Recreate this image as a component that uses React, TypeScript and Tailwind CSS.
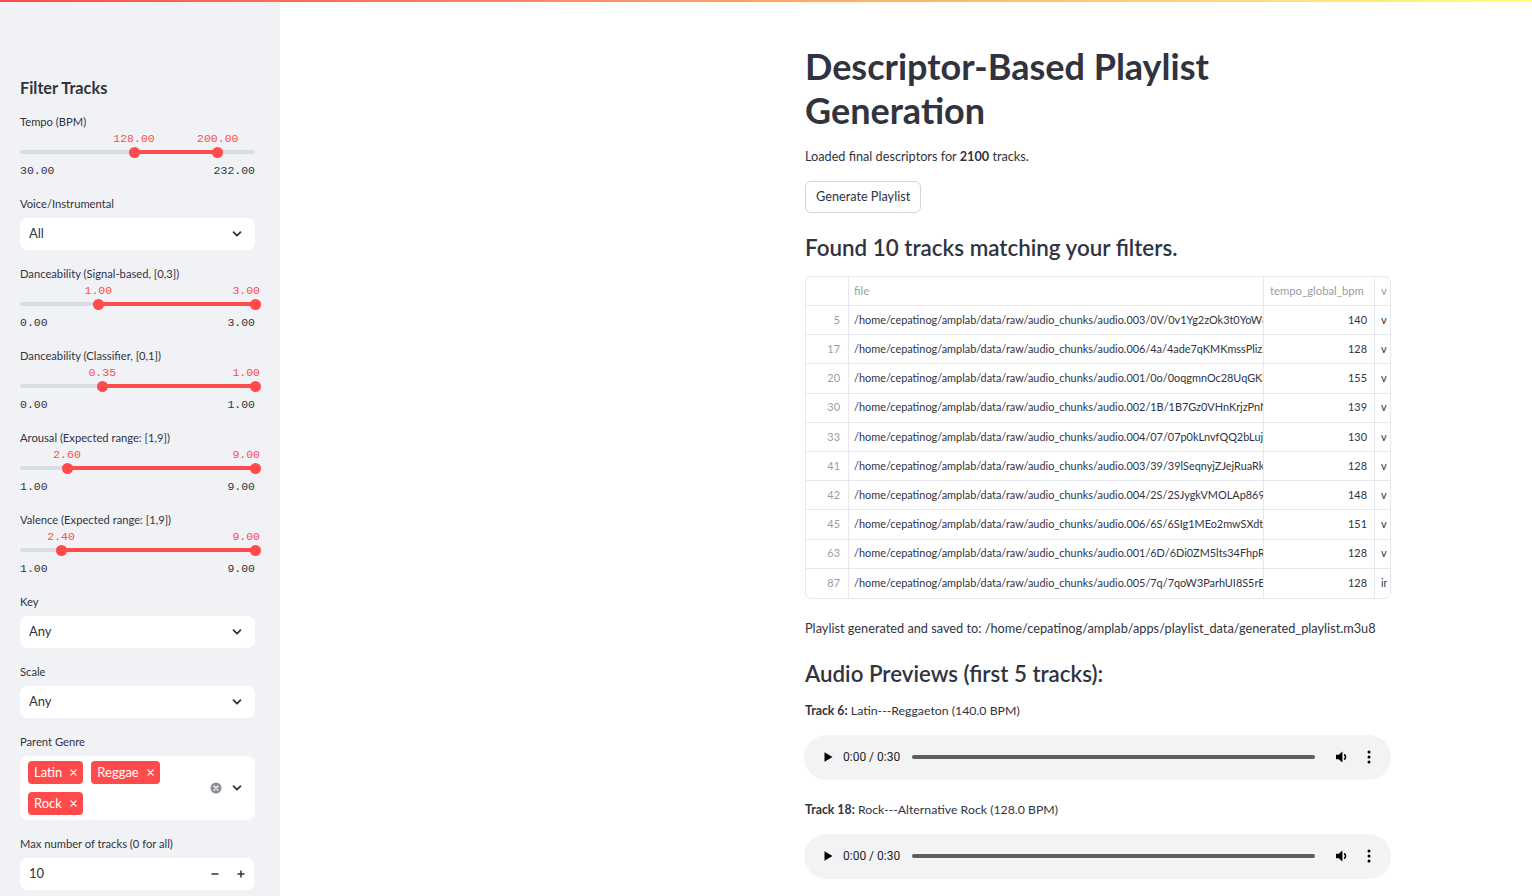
import React from "react";

const SANS = "font-['Lato','Noto_Sans',sans-serif]";
const MONO = "font-['Liberation_Mono','DejaVu_Sans_Mono',monospace]";

function Chevron() {
  return (
    <svg width="12" height="12" viewBox="0 0 12 12" className="shrink-0">
      <path d="M2.5 4.2 L6 7.7 L9.5 4.2" fill="none" stroke="#31333f" strokeWidth="1.8" strokeLinecap="round" strokeLinejoin="round" />
    </svg>
  );
}

function Label({ children }: { children: React.ReactNode }) {
  return <div className="h-[16px] text-[11.2px] leading-[16px] text-[#31333f]">{children}</div>;
}

function RangeSlider({ min, max, lo, hi }: { min: number; max: number; lo: number; hi: number }) {
  const W = 235;
  const p1 = ((lo - min) / (max - min)) * W;
  const p2 = ((hi - min) / (max - min)) * W;
  const f = (v: number) => v.toFixed(2);
  const valLabel = (p: number, v: number) => {
    const atEnd = p >= W - 0.5;
    return (
      <div
        className={`absolute top-0 h-[16px] text-[11.5px] leading-[16px] text-[#ff4b4b] whitespace-nowrap ${MONO}`}
        style={atEnd ? { right: -5 } : { left: p, transform: "translateX(-50%)" }}
      >
        {f(v)}
      </div>
    );
  };
  return (
    <div className="relative mt-[1px] h-[48px] w-[235px]">
      {valLabel(p1, lo)}
      {valLabel(p2, hi)}
      <div className="absolute left-0 right-0 top-[19px] h-[4px] rounded-full bg-[#d9dce4]" />
      <div className="absolute top-[19px] h-[4px] bg-[#ff4b4b]" style={{ left: p1, width: p2 - p1 }} />
      <div className="absolute top-[15.5px] h-[11px] w-[11px] rounded-full bg-[#ff4b4b]" style={{ left: p1 - 5.5 }} />
      <div className="absolute top-[15.5px] h-[11px] w-[11px] rounded-full bg-[#ff4b4b]" style={{ left: p2 - 5.5 }} />
      <div className={`absolute left-0 right-0 top-[32px] flex h-[16px] justify-between text-[11.5px] leading-[16px] text-[#31333f] ${MONO}`}>
        <span>{f(min)}</span>
        <span>{f(max)}</span>
      </div>
    </div>
  );
}

function Select({ value }: { value: string }) {
  return (
    <div className="mt-[6px] flex h-[32px] w-[235px] items-center justify-between rounded-[7px] bg-white pl-[9px] pr-[12px] text-[13px] text-[#31333f]">
      <span>{value}</span>
      <Chevron />
    </div>
  );
}

function Tag({ text }: { text: string }) {
  return (
    <div className="flex h-[23px] items-center gap-[8px] rounded-[4px] bg-[#ff4b4b] pl-[6px] pr-[6px] text-[13px] text-white">
      <span>{text}</span>
      <svg width="7" height="7" viewBox="0 0 8 8">
        <path d="M1 1 L7 7 M7 1 L1 7" stroke="white" strokeWidth="1.4" strokeLinecap="round" />
      </svg>
    </div>
  );
}

function Sidebar() {
  return (
    <div className={`flex w-[280px] shrink-0 flex-col bg-[#f0f2f6] pl-[20px] pt-[75px] ${SANS}`}>
      <div className="h-[22px] text-[16.3px] font-bold leading-[22px] text-[#31333f]">Filter Tracks</div>
      <div className="mt-[15px]">
        <Label>Tempo (BPM)</Label>
        <RangeSlider min={30} max={232} lo={128} hi={200} />
      </div>
      <div className="mt-[17px]">
        <Label>Voice/Instrumental</Label>
        <Select value="All" />
      </div>
      <div className="mt-[16px]">
        <Label>Danceability (Signal-based, [0,3])</Label>
        <RangeSlider min={0} max={3} lo={1} hi={3} />
      </div>
      <div className="mt-[17px]">
        <Label>Danceability (Classifier, [0,1])</Label>
        <RangeSlider min={0} max={1} lo={0.35} hi={1} />
      </div>
      <div className="mt-[17px]">
        <Label>Arousal (Expected range: [1,9])</Label>
        <RangeSlider min={1} max={9} lo={2.6} hi={9} />
      </div>
      <div className="mt-[17px]">
        <Label>Valence (Expected range: [1,9])</Label>
        <RangeSlider min={1} max={9} lo={2.4} hi={9} />
      </div>
      <div className="mt-[17px]">
        <Label>Key</Label>
        <Select value="Any" />
      </div>
      <div className="mt-[16px]">
        <Label>Scale</Label>
        <Select value="Any" />
      </div>
      <div className="mt-[16px]">
        <Label>Parent Genre</Label>
        <div className="mt-[6px] flex h-[64px] w-[235px] items-center rounded-[7px] bg-white pl-[8px] pr-[12px]">
          <div className="flex w-[170px] flex-wrap gap-x-[8px] gap-y-[8px]">
            <Tag text="Latin" />
            <Tag text="Reggae" />
            <Tag text="Rock" />
          </div>
          <div className="ml-auto flex items-center gap-[9px]">
            <svg width="12" height="12" viewBox="0 0 12 12">
              <circle cx="6" cy="6" r="5.5" fill="#8b8e97" />
              <path d="M4 4 L8 8 M8 4 L4 8" stroke="white" strokeWidth="1.2" strokeLinecap="round" />
            </svg>
            <Chevron />
          </div>
        </div>
      </div>
      <div className="mt-[16px]">
        <Label>Max number of tracks (0 for all)</Label>
        <div className="mt-[6px] flex h-[32px] w-[234px] items-center rounded-[7px] bg-white pl-[9px] text-[13px] text-[#31333f]">
          <span>10</span>
          <div className="ml-auto flex h-full">
            <div className="flex w-[26px] items-center justify-center">
              <svg width="8" height="8" viewBox="0 0 8 8"><path d="M0.5 4 H7.5" stroke="#31333f" strokeWidth="1.5" /></svg>
            </div>
            <div className="flex w-[26px] items-center justify-center">
              <svg width="8" height="8" viewBox="0 0 8 8"><path d="M0.5 4 H7.5 M4 0.5 V7.5" stroke="#31333f" strokeWidth="1.5" /></svg>
            </div>
          </div>
        </div>
      </div>
    </div>
  );
}

const rows: [number, string, number, string][] = [
  [5, "audio.003/0V/0v1Yg2zOk3t0YoW8SqPxL.mp3", 140, "voice"],
  [17, "audio.006/4a/4ade7qKMKmssPlizXcQ2.mp3", 128, "voice"],
  [20, "audio.001/0o/0oqgmnOc28UqGKb7Tm.mp3", 155, "voice"],
  [30, "audio.002/1B/1B7Gz0VHnKrjzPnNw4e.mp3", 139, "voice"],
  [33, "audio.004/07/07p0kLnvfQQ2bLujR9a.mp3", 130, "voice"],
  [41, "audio.003/39/39lSeqnyjZJejRuaRk1.mp3", 128, "voice"],
  [42, "audio.004/2S/2SJygkVMOLAp869dWz.mp3", 148, "voice"],
  [45, "audio.006/6S/6SIg1MEo2mwSXdtHn.mp3", 151, "voice"],
  [63, "audio.001/6D/6Di0ZM5lts34FhpRq8.mp3", 128, "voice"],
  [87, "audio.005/7q/7qoW3ParhUI8S5rEv.mp3", 128, "instrumental"],
];

function DataTable() {
  return (
    <div className="mt-[14px] w-[586px] overflow-hidden rounded-[6px] border border-[#e6e8ed] text-[10.9px]">
      <div className="flex h-[29px] border-b border-[#e6e8ed] text-[11.3px] text-[#9a9ca5]">
        <div className="w-[43px] shrink-0 border-r border-[#e6e8ed]" />
        <div className="flex w-[415px] shrink-0 items-center border-r border-[#e6e8ed] pl-[5px]">file</div>
        <div className="flex w-[111px] shrink-0 items-center border-r border-[#e6e8ed] pl-[6px]">tempo_global_bpm</div>
        <div className="flex flex-1 items-center pl-[6px]">
          <span className="inline-block w-[6px] overflow-hidden whitespace-nowrap">voice_instrumental</span>
        </div>
      </div>
      {rows.map(([idx, f, bpm, vi], i) => (
        <div key={idx} className={`flex h-[29.2px] ${i < rows.length - 1 ? "border-b border-[#e6e8ed]" : ""}`}>
          <div className="flex w-[43px] shrink-0 items-center justify-end border-r border-[#e6e8ed] pr-[8px] text-[#9a9ca5]">{idx}</div>
          <div className="flex w-[415px] shrink-0 items-center overflow-hidden whitespace-nowrap border-r border-[#e6e8ed] pl-[5px] text-[#31333f]">
            /home/cepatinog/amplab/data/raw/audio_chunks/{f}
          </div>
          <div className="flex w-[111px] shrink-0 items-center justify-end border-r border-[#e6e8ed] pr-[7px] text-[#31333f]">{bpm}</div>
          <div className="flex flex-1 items-center pl-[6px] text-[#31333f]">
            <span className="inline-block w-[6px] overflow-hidden whitespace-nowrap">{vi}</span>
          </div>
        </div>
      ))}
    </div>
  );
}

function AudioPlayer({ mt }: { mt: string }) {
  return (
    <div className={`${mt} flex h-[45px] w-[587px] -ml-[1px] items-center rounded-full bg-[#f1f3f4] pl-[18px] pr-[18px] font-['Roboto',sans-serif] text-[#000]`}>
      <svg width="12" height="12" viewBox="0 0 12 12" className="shrink-0">
        <path d="M2.5 1.2 L10.5 6 L2.5 10.8 Z" fill="#000" />
      </svg>
      <span className="ml-[9px] text-[12px] text-[#1f1f1f]">0:00 / 0:30</span>
      <div className="ml-[12px] h-[4px] w-[403px] rounded-full bg-[#5e5e5e]" />
      <svg width="14" height="14" viewBox="0 0 14 14" className="ml-[20px] shrink-0">
        <path d="M1 4.8 H3.8 L7.4 1.6 V12.4 L3.8 9.2 H1 Z" fill="#000" />
        <path d="M9.2 4.3 A3.4 3.4 0 0 1 9.2 9.7" fill="none" stroke="#000" strokeWidth="1.6" />
      </svg>
      <svg width="4" height="14" viewBox="0 0 4 14" className="ml-[18px] shrink-0">
        <circle cx="2" cy="2" r="1.5" fill="#000" />
        <circle cx="2" cy="7" r="1.5" fill="#000" />
        <circle cx="2" cy="12" r="1.5" fill="#000" />
      </svg>
    </div>
  );
}

function Main() {
  return (
    <div className={`flex-1 bg-white ${SANS} text-[#31333f]`}>
      <div className="ml-[525px] w-[590px] pt-[42px]">
        <h1 className="text-[36px] font-bold leading-[44px]">
          Descriptor-Based Playlist
          <br />
          Generation
        </h1>
        <p className="mt-[14px] h-[20px] text-[12.7px] leading-[20px]">
          Loaded final descriptors for <b className="font-bold">2100</b> tracks.
        </p>
        <button className="mt-[15px] flex h-[32px] items-center rounded-[6px] border border-[#d6d6d9] bg-white px-[10px] text-[12.7px] text-[#31333f]">
          Generate Playlist
        </button>
        <h3 className="mt-[21px] h-[28px] text-[22.4px] font-semibold leading-[28px]">Found 10 tracks matching your filters.</h3>
        <DataTable />
        <p className="mt-[19px] h-[20px] text-[12.75px] leading-[20px]">
          Playlist generated and saved to: /home/cepatinog/amplab/apps/playlist_data/generated_playlist.m3u8
        </p>
        <h3 className="mt-[22px] h-[28px] text-[22.3px] font-semibold leading-[28px]">Audio Previews (first 5 tracks):</h3>
        <p className="mt-[13px] h-[20px] text-[12.3px] leading-[20px]">
          <b className="font-bold">Track 6:</b> Latin---Reggaeton (140.0 BPM)
        </p>
        <AudioPlayer mt="mt-[14px]" />
        <p className="mt-[20px] h-[20px] text-[12.3px] leading-[20px]">
          <b className="font-bold">Track 18:</b> Rock---Alternative Rock (128.0 BPM)
        </p>
        <AudioPlayer mt="mt-[14px]" />
      </div>
    </div>
  );
}

export default function App() {
  return (
    <div className="flex h-[896px] w-[1532px] flex-col overflow-hidden bg-white">
      <div className="h-[2px] w-full shrink-0 bg-[linear-gradient(90deg,#ff4b4b,#fffd80)]" />
      <div className="flex min-h-0 flex-1">
        <Sidebar />
        <Main />
      </div>
    </div>
  );
}
